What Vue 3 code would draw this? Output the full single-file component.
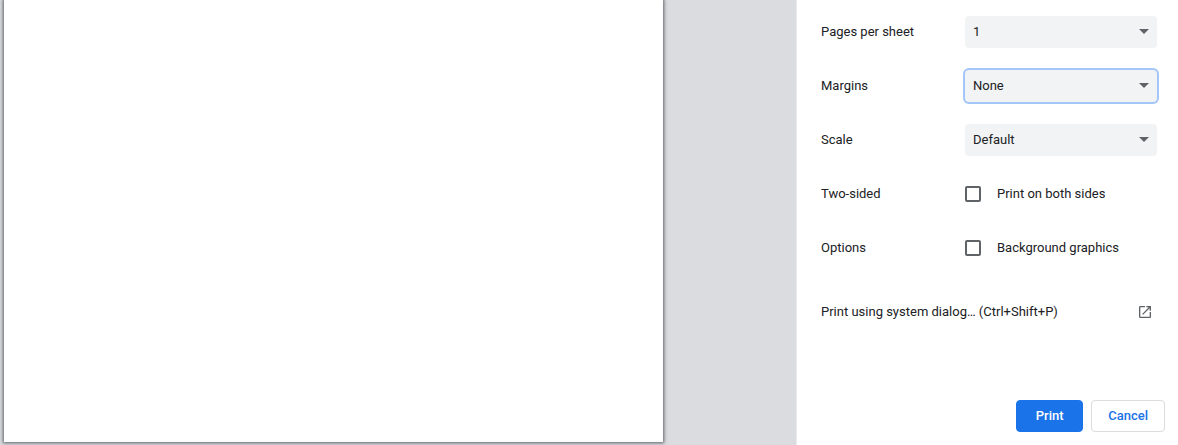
<template>
  <div class="print-dialog">
    <main class="preview">
      <div class="preview-page"></div>
    </main>

    <aside class="sidebar">
      <div class="settings">
        <div v-for="item in selects" :key="item.id" class="row">
          <label class="row-label" :for="item.id">{{ item.label }}</label>
          <div class="row-control">
            <select
              :id="item.id"
              v-model="item.value"
              class="select"
              :class="{ active: activeId === item.id }"
              @focus="activeId = item.id"
            >
              <option v-for="option in item.options" :key="option">{{ option }}</option>
            </select>
          </div>
        </div>

        <div v-for="item in checks" :key="item.id" class="row">
          <span class="row-label">{{ item.title }}</span>
          <label class="row-control check" :for="item.id">
            <input :id="item.id" v-model="item.checked" class="checkbox" type="checkbox" />
            <span>{{ item.label }}</span>
          </label>
        </div>

        <button class="system-dialog" type="button">
          <span>Print using system dialog… (Ctrl+Shift+P)</span>
          <svg class="launch-icon" viewBox="0 0 24 24" aria-hidden="true">
            <path
              d="M19 19H5V5h7V3H5a2 2 0 0 0-2 2v14a2 2 0 0 0 2 2h14c1.1 0 2-.9 2-2v-7h-2v7zM14 3v2h3.59l-9.83 9.83 1.41 1.41L19 6.41V10h2V3h-7z"
            />
          </svg>
        </button>
      </div>

      <footer class="actions">
        <button class="button primary" type="button">Print</button>
        <button class="button" type="button">Cancel</button>
      </footer>
    </aside>
  </div>
</template>

<script setup>
import { ref } from 'vue'

const activeId = ref('margins')

const selects = ref([
  { id: 'pages', label: 'Pages per sheet', value: '1', options: ['1', '2', '4', '6', '9', '16'] },
  {
    id: 'margins',
    label: 'Margins',
    value: 'None',
    options: ['Default', 'None', 'Minimum', 'Custom'],
  },
  { id: 'scale', label: 'Scale', value: 'Default', options: ['Default', 'Custom'] },
])

const checks = ref([
  { id: 'duplex', title: 'Two-sided', label: 'Print on both sides', checked: false },
  { id: 'background', title: 'Options', label: 'Background graphics', checked: false },
])
</script>

<style>
body {
  margin: 0;
}
</style>

<style scoped>
.print-dialog {
  display: flex;
  min-height: 100vh;
  color: #202124;
  background: #fff;
  font-family: Roboto, 'Liberation Sans', sans-serif;
  font-size: 13px;
  line-height: 20px;
}

.preview {
  display: flex;
  flex: 1;
  padding: 0 133px 3px 4px;
  overflow: hidden;
  background: #dadce0;
}

.preview-page {
  flex: 1;
  background: #fff;
  box-shadow:
    0 0 2px 1px rgba(60, 64, 67, 0.4),
    0 0 4px 1px rgba(60, 64, 67, 0.5);
}

.sidebar {
  display: flex;
  flex: 0 0 381px;
  flex-direction: column;
  border-left: 1px solid #e8eaed;
}

.settings {
  flex: 1;
  padding: 5px 21px 0 24px;
}

.row {
  display: flex;
  align-items: center;
  min-height: 54px;
}

.row-label {
  flex: 1;
}

.row-control {
  flex: 0 0 192px;
}

.select {
  display: block;
  width: 100%;
  height: 32px;
  padding: 0 24px 0 8px;
  appearance: none;
  border: none;
  border-radius: 4px;
  outline: none;
  color: inherit;
  background: #f1f3f4
    url("data:image/svg+xml,%3Csvg xmlns='http://www.w3.org/2000/svg' width='10' height='6' fill='%235f6368'%3E%3Cpath d='M0 0h10L5 5z'/%3E%3C/svg%3E")
    no-repeat right 8px center;
  font: inherit;
}

.select.active {
  box-shadow: 0 0 0 2px #a3c5f8;
}

.check {
  display: flex;
  align-items: center;
  gap: 16px;
}

.checkbox {
  width: 16px;
  height: 16px;
  margin: 0;
  appearance: none;
  border: 2px solid #5f6368;
  border-radius: 2px;
}

.checkbox:checked {
  border-color: #1a73e8;
  background: #1a73e8;
}

.system-dialog {
  display: flex;
  align-items: center;
  justify-content: space-between;
  width: 100%;
  height: 48px;
  margin-top: 13px;
  padding: 0 4px 0 0;
  border: none;
  color: inherit;
  background: none;
  font: inherit;
  cursor: pointer;
}

.launch-icon {
  width: 16px;
  height: 16px;
  fill: #5f6368;
}

.actions {
  display: flex;
  justify-content: flex-end;
  gap: 8px;
  padding: 13px;
}

.button {
  min-width: 67px;
  height: 32px;
  padding: 0 16px;
  border: 1px solid #dadce0;
  border-radius: 4px;
  color: #1a73e8;
  background: #fff;
  font: inherit;
  font-weight: 500;
  cursor: pointer;
}

.button.primary {
  border-color: #1a73e8;
  color: #fff;
  background: #1a73e8;
}
</style>
